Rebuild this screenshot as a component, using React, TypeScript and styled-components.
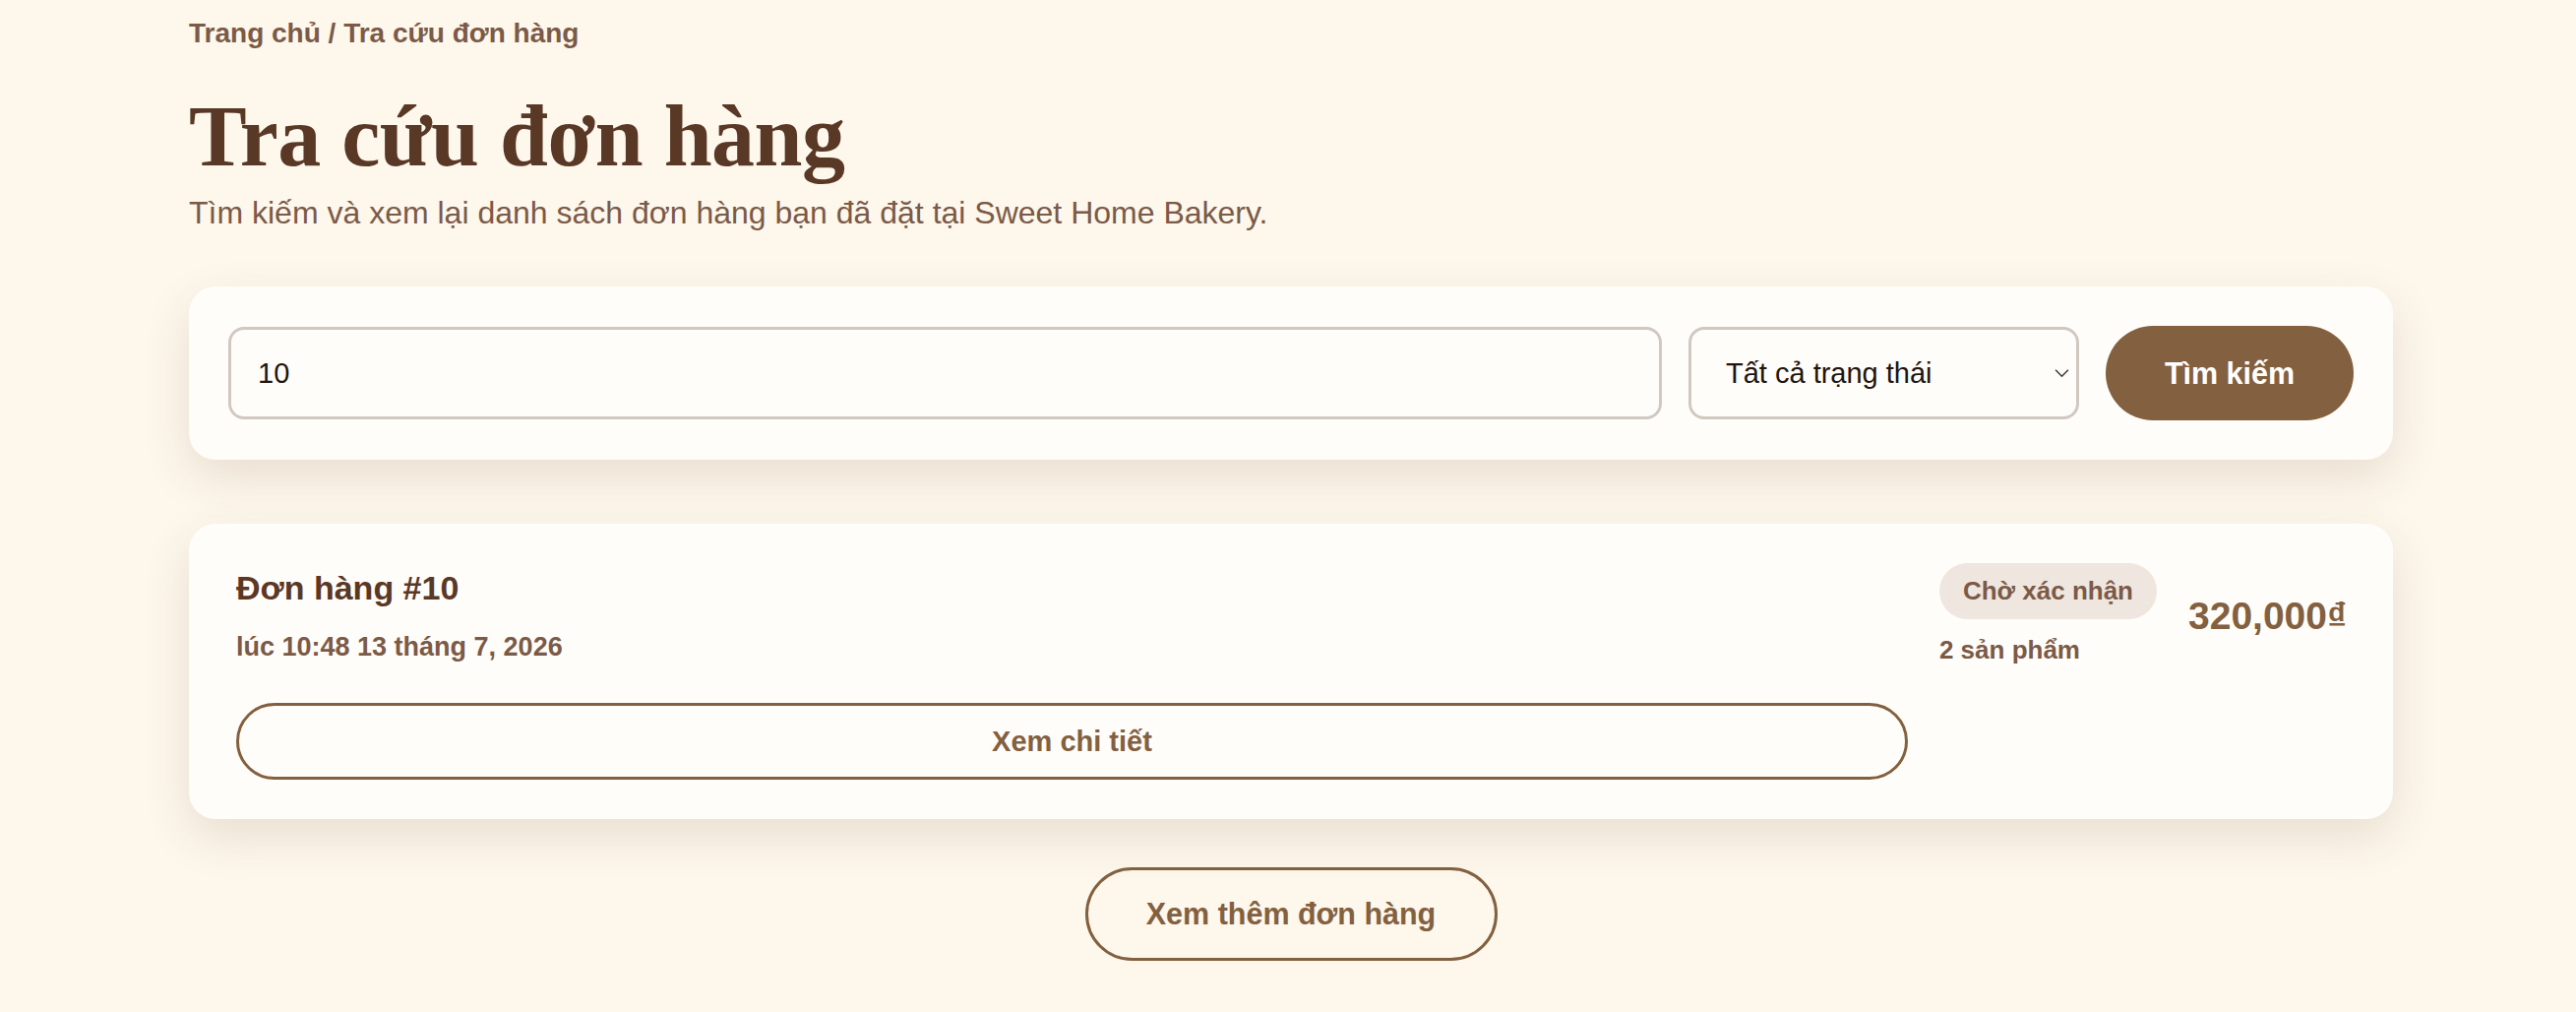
import React from 'react'
import styled, { createGlobalStyle } from 'styled-components'

const GlobalStyle = createGlobalStyle`
  body {
    margin: 0;
    background: #fdf7ec;
    font-family: 'Liberation Sans', Arial, sans-serif;
  }
  * {
    box-sizing: border-box;
  }
`

const App = () => {
  return (
    <>
      <GlobalStyle />
      <Page>
        <Breadcrumb>Trang chủ / Tra cứu đơn hàng</Breadcrumb>
        <Title>Tra cứu đơn hàng</Title>
        <Subtitle>
          Tìm kiếm và xem lại danh sách đơn hàng bạn đã đặt tại Sweet Home Bakery.
        </Subtitle>

        <SearchCard>
          <SearchInput defaultValue='10' />
          <SelectWrap>
            <StatusSelect defaultValue='all'>
              <option value='all'>Tất cả trạng thái</option>
              <option value='pending'>Chờ xác nhận</option>
              <option value='done'>Hoàn thành</option>
            </StatusSelect>
            <Chevron viewBox='0 0 14 8'>
              <path d='M1 1l6 6 6-6' />
            </Chevron>
          </SelectWrap>
          <SearchButton>Tìm kiếm</SearchButton>
        </SearchCard>

        <OrderCard>
          <OrderMain>
            <OrderTitle>Đơn hàng #10</OrderTitle>
            <OrderDate>lúc 10:48 13 tháng 7, 2026</OrderDate>
            <OutlineButton $height={78}>Xem chi tiết</OutlineButton>
          </OrderMain>
          <OrderAside>
            <StatusCol>
              <Badge>Chờ xác nhận</Badge>
              <Count>2 sản phẩm</Count>
            </StatusCol>
            <Price>320,000₫</Price>
          </OrderAside>
        </OrderCard>

        <MoreRow>
          <OutlineButton $height={95} $width={419} $size={30.5}>
            Xem thêm đơn hàng
          </OutlineButton>
        </MoreRow>
      </Page>
    </>
  )
}

export default App

const Page = styled.main`
  max-width: 2246px;
  margin: 0 auto;
  padding: 12px 0 40px 6px;
`

const Breadcrumb = styled.div`
  font-size: 28px;
  font-weight: 700;
  line-height: 43px;
  color: #7b5a47;
`

const Title = styled.h1`
  margin: 32px 0 0;
  font-family: 'Liberation Serif', 'Times New Roman', serif;
  font-size: 88px;
  font-weight: 700;
  line-height: 104px;
  letter-spacing: -0.5px;
  color: #5a3826;
`

const Subtitle = styled.p`
  margin: 1px 0 0;
  font-size: 32px;
  line-height: 48px;
  color: #7b5a47;
`

const Card = styled.section`
  background: #fffdf9;
  border-radius: 27px;
  box-shadow: 0 18px 48px rgba(110, 78, 45, 0.14);
`

const SearchCard = styled(Card)`
  margin-top: 51px;
  padding: 40px;
  display: flex;
  align-items: center;
  gap: 27px;
`

const fieldBase = `
  height: 94px;
  border: 3px solid #d0c8c1;
  border-radius: 16px;
  background: #fffdf9;
  font-family: 'Liberation Sans', Arial, sans-serif;
  font-size: 29px;
  color: #22150f;
  outline: none;
`

const SearchInput = styled.input`
  ${fieldBase}
  flex: 1;
  min-width: 0;
  padding: 0 27px;
`

const SelectWrap = styled.div`
  position: relative;
  width: 397px;
  flex-shrink: 0;
`

const StatusSelect = styled.select`
  ${fieldBase}
  width: 100%;
  appearance: none;
  padding: 0 60px 0 35px;
`

const Chevron = styled.svg`
  position: absolute;
  right: 10px;
  top: 50%;
  width: 15px;
  height: 9px;
  transform: translateY(-50%);
  fill: none;
  stroke: #3a3a3a;
  stroke-width: 1.4;
  pointer-events: none;
`

const SearchButton = styled.button`
  width: 252px;
  height: 96px;
  flex-shrink: 0;
  border: none;
  border-radius: 999px;
  background: #83603f;
  color: #fff;
  font-family: 'Liberation Sans', Arial, sans-serif;
  font-size: 30.5px;
  font-weight: 700;
`

const OrderCard = styled(Card)`
  margin-top: 65px;
  padding: 40px 47px 40px 48px;
  display: flex;
  align-items: flex-start;
  gap: 32px;
`

const OrderMain = styled.div`
  flex: 1;
  display: flex;
  flex-direction: column;
`

const OrderTitle = styled.h2`
  margin: 0;
  font-size: 34px;
  font-weight: 700;
  line-height: 51px;
  color: #5a3826;
`

const OrderDate = styled.div`
  margin-top: 14px;
  font-size: 27px;
  font-weight: 700;
  line-height: 40px;
  color: #7b5a47;
`

const OutlineButton = styled.button<{ $height: number; $width?: number; $size?: number }>`
  margin-top: ${({ $width }) => ($width ? 0 : 37)}px;
  width: ${({ $width }) => ($width ? `${$width}px` : '100%')};
  height: ${({ $height }) => $height}px;
  border: 3px solid #83603f;
  border-radius: 999px;
  background: transparent;
  color: #83603f;
  font-family: 'Liberation Sans', Arial, sans-serif;
  font-size: ${({ $size }) => $size ?? 29}px;
  font-weight: 700;
`

const OrderAside = styled.div`
  display: flex;
  align-items: center;
  gap: 32px;
`

const StatusCol = styled.div`
  display: flex;
  flex-direction: column;
  align-items: flex-start;
`

const Badge = styled.span`
  padding: 9px 24px;
  border-radius: 999px;
  background: #efe6df;
  font-size: 26px;
  font-weight: 700;
  line-height: 39px;
  color: #7b5a47;
`

const Count = styled.span`
  margin-top: 12px;
  font-size: 26px;
  font-weight: 700;
  line-height: 39px;
  color: #7b5a47;
`

const Price = styled.span`
  font-size: 39px;
  font-weight: 700;
  color: #83603f;
`

const MoreRow = styled.div`
  margin-top: 49px;
  display: flex;
  justify-content: center;
`
